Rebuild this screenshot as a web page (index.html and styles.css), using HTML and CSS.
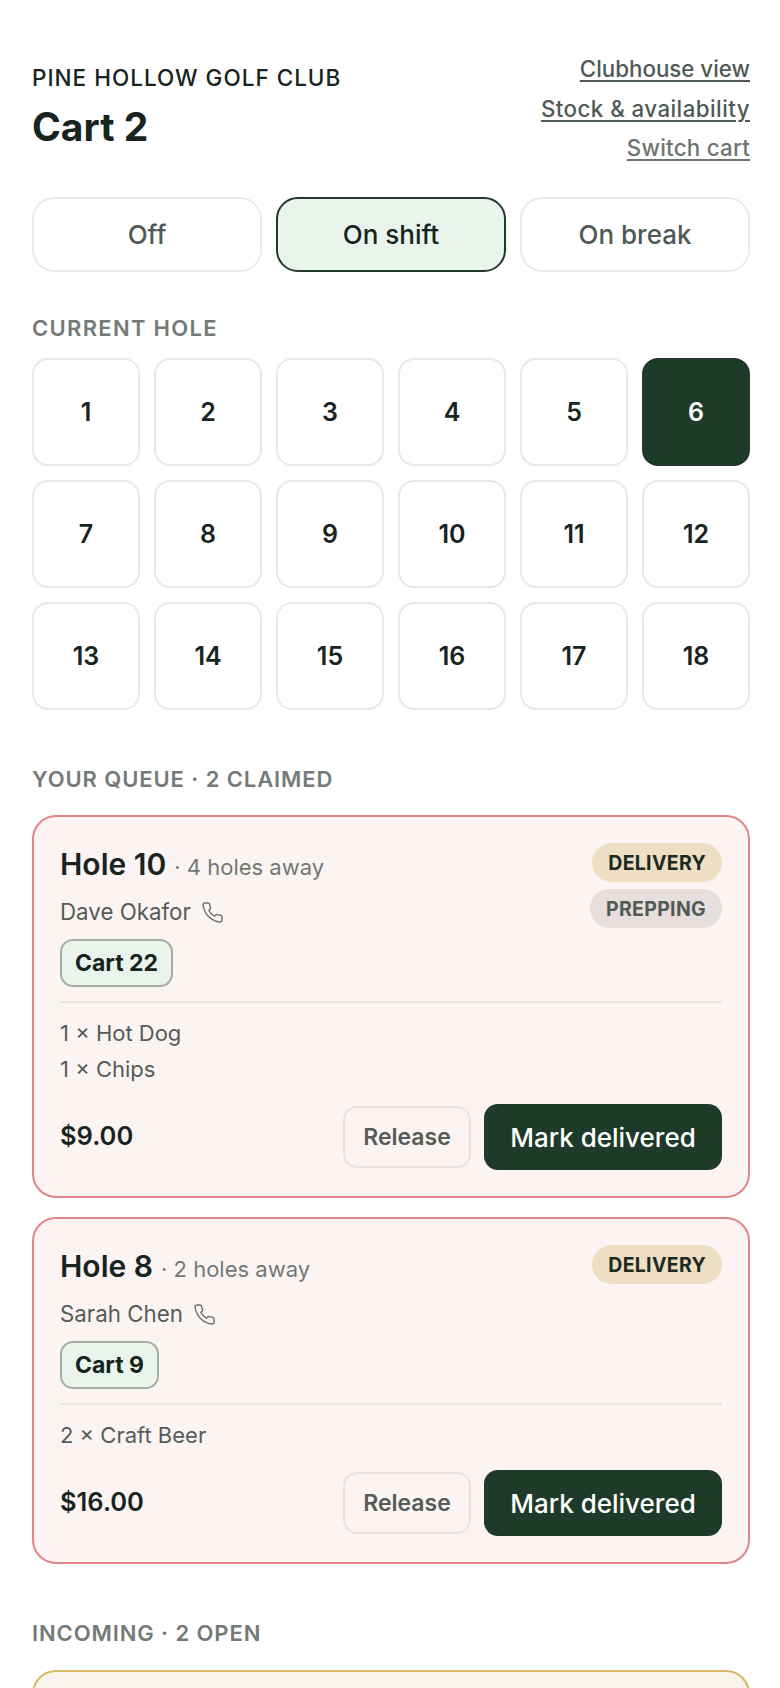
FILE: index.html
```html
<!DOCTYPE html>
<html lang="en">
<head>
<meta charset="utf-8">
<title>Cart 2</title>
<link rel="stylesheet" href="styles.css">
</head>
<body>
<main class="page">
  <header class="top">
    <div class="brand">
      <div class="club">PINE HOLLOW GOLF CLUB</div>
      <h1 class="cart-title">Cart 2</h1>
    </div>
    <nav class="links">
      <a class="link" href="#">Clubhouse view</a>
      <a class="link link-wide" href="#">Stock &amp; availability</a>
      <a class="link link-muted" href="#">Switch cart</a>
    </nav>
  </header>

  <div class="status">
    <button class="status-btn">Off</button>
    <button class="status-btn is-on">On shift</button>
    <button class="status-btn">On break</button>
  </div>

  <div class="label label-hole">CURRENT HOLE</div>
  <div class="holes">
    <button class="hole">1</button><button class="hole">2</button><button class="hole">3</button>
    <button class="hole">4</button><button class="hole">5</button><button class="hole is-current">6</button>
    <button class="hole">7</button><button class="hole">8</button><button class="hole">9</button>
    <button class="hole">10</button><button class="hole">11</button><button class="hole">12</button>
    <button class="hole">13</button><button class="hole">14</button><button class="hole">15</button>
    <button class="hole">16</button><button class="hole">17</button><button class="hole">18</button>
  </div>

  <div class="label label-queue">YOUR QUEUE · 2 CLAIMED</div>
  <div class="cards">
    <article class="card">
      <div class="head">
        <div class="who">
          <div class="where"><span class="hole-name">Hole 10</span><span class="away">· 4 holes away</span></div>
          <div class="person">Dave Okafor
            <svg class="phone" viewBox="0 0 24 24" fill="none" stroke="currentColor" stroke-width="1.5" stroke-linecap="round" stroke-linejoin="round"><path d="M22 16.92v3a2 2 0 0 1-2.18 2 19.79 19.79 0 0 1-8.63-3.07 19.5 19.5 0 0 1-6-6 19.79 19.79 0 0 1-3.07-8.67A2 2 0 0 1 4.11 2h3a2 2 0 0 1 2 1.72c.13.96.36 1.9.7 2.81a2 2 0 0 1-.45 2.11L8.09 9.91a16 16 0 0 0 6 6l1.27-1.27a2 2 0 0 1 2.11-.45c.91.34 1.85.57 2.81.7A2 2 0 0 1 22 16.92z"/></svg>
          </div>
          <span class="chip">Cart 22</span>
        </div>
        <div class="pills">
          <span class="pill pill-delivery">DELIVERY</span>
          <span class="pill pill-prep">PREPPING</span>
        </div>
      </div>
      <div class="items">
        <div class="item">1 × Hot Dog</div>
        <div class="item">1 × Chips</div>
      </div>
      <div class="foot">
        <span class="price">$9.00</span>
        <div class="actions">
          <button class="release">Release</button>
          <button class="deliver">Mark delivered</button>
        </div>
      </div>
    </article>

    <article class="card">
      <div class="head">
        <div class="who">
          <div class="where"><span class="hole-name">Hole 8</span><span class="away">· 2 holes away</span></div>
          <div class="person">Sarah Chen
            <svg class="phone" viewBox="0 0 24 24" fill="none" stroke="currentColor" stroke-width="1.5" stroke-linecap="round" stroke-linejoin="round"><path d="M22 16.92v3a2 2 0 0 1-2.18 2 19.79 19.79 0 0 1-8.63-3.07 19.5 19.5 0 0 1-6-6 19.79 19.79 0 0 1-3.07-8.67A2 2 0 0 1 4.11 2h3a2 2 0 0 1 2 1.72c.13.96.36 1.9.7 2.81a2 2 0 0 1-.45 2.11L8.09 9.91a16 16 0 0 0 6 6l1.27-1.27a2 2 0 0 1 2.11-.45c.91.34 1.85.57 2.81.7A2 2 0 0 1 22 16.92z"/></svg>
          </div>
          <span class="chip">Cart 9</span>
        </div>
        <div class="pills">
          <span class="pill pill-delivery">DELIVERY</span>
        </div>
      </div>
      <div class="items">
        <div class="item">2 × Craft Beer</div>
      </div>
      <div class="foot">
        <span class="price">$16.00</span>
        <div class="actions">
          <button class="release">Release</button>
          <button class="deliver">Mark delivered</button>
        </div>
      </div>
    </article>
  </div>

  <div class="label label-incoming">INCOMING · 2 OPEN</div>
  <article class="card card-open"></article>
</main>
</body>
</html>
```
FILE: styles.css
```css
* { box-sizing: border-box; }
html, body { margin: 0; padding: 0; background: #fff; }
body { height: 1688px; overflow: hidden; font-family: Inter, "Liberation Sans", sans-serif; color: #18241e; }
button { font-family: inherit; cursor: pointer; }
.page { padding: 0 30px 0 32px; }

.top { display: flex; justify-content: space-between; align-items: flex-start; padding-top: 50px; }
.club { padding-top: 1px; font-size: 22.5px; line-height: 53px; height: 54px; font-weight: 500; letter-spacing: 1px; color: #18241e; }
.cart-title { margin: 0; font-size: 39px; line-height: 46px; font-weight: 700; }
.links { display: flex; flex-direction: column; align-items: flex-end; gap: 9px; padding-top: 4px; }
.link { font-size: 22.3px; line-height: 30.5px; font-weight: 500; color: #4f5a55; text-decoration: underline; text-underline-offset: 3px; }
.link-wide { letter-spacing: 0.45px; }
.link-muted { color: #6c7470; letter-spacing: 0.25px; }

.status { display: grid; grid-template-columns: repeat(3, 1fr); gap: 14px; margin-top: 33.5px; }
.status-btn { height: 75px; border: 2px solid #e9e9e6; border-radius: 22px; background: #fff; font-size: 26px; font-weight: 500; color: #4f5a55; }
.status-btn.is-on { background: #e9f4ec; border-color: #1f3a2a; color: #18241e; }

.label { font-size: 22px; line-height: 30px; font-weight: 600; letter-spacing: 0.9px; color: #747b77; }
.label-hole { margin-top: 41px; letter-spacing: 1.3px; }
.label-queue { margin-top: 54px; }
.label-incoming { margin-top: 54px; }

.holes { display: grid; grid-template-columns: repeat(6, 1fr); gap: 14px; margin-top: 15px; }
.hole { aspect-ratio: 1; border: 2px solid #e8e8e5; border-radius: 16px; background: #fff; font-size: 25px; font-weight: 600; color: #18241e; padding: 0; }
.hole.is-current { background: #1e3a28; border-color: #1e3a28; color: #fff; }

.cards { display: flex; flex-direction: column; gap: 19px; margin-top: 21px; }
.card { border: 2px solid #e28488; border-radius: 24px; background: #fcf4f2; padding: 26px; }
.card-open { margin-top: 22px; min-height: 300px; background: #faf5ec; border-color: #d9b565; }

.head { display: flex; justify-content: space-between; align-items: flex-start; padding-bottom: 14px; border-bottom: 2px solid #e8e4e2; }
.who { display: flex; flex-direction: column; align-items: flex-start; }
.where { display: flex; align-items: baseline; gap: 8px; line-height: 42px; }
.hole-name { font-size: 30px; font-weight: 600; color: #18241e; }
.away { font-size: 22px; color: #727975; }
.person { display: flex; align-items: center; gap: 10px; margin-top: 6px; font-size: 22.3px; line-height: 36px; color: #555c58; }
.phone { width: 23px; height: 23px; color: #6c7470; }
.chip { display: inline-flex; align-items: center; height: 48px; margin-top: 9px; padding: 0 13px; border: 2px solid #a4aea7; border-radius: 13px; background: #e9f4ec; font-size: 23px; font-weight: 700; color: #14241b; }
.pills { display: flex; flex-direction: column; align-items: flex-end; gap: 7px; }
.pill { display: inline-flex; align-items: center; height: 39px; padding: 0 16px; border-radius: 20px; font-size: 19.5px; font-weight: 700; letter-spacing: 0.3px; }
.pill-delivery { background: #eedfc4; color: #1c2a22; }
.pill-prep { background: #e6dfdd; color: #525a55; }

.items { padding-top: 12px; }
.item { font-size: 22px; line-height: 36px; color: #555c58; }

.foot { display: flex; justify-content: space-between; align-items: center; margin-top: 17px; }
.price { padding-bottom: 4px; font-size: 25.5px; font-weight: 600; color: #18241e; }
.actions { display: flex; align-items: center; gap: 13px; }
.release { height: 62px; width: 128px; border: 2px solid #ebe2e0; border-radius: 14px; background: transparent; font-size: 23px; font-weight: 600; color: #555c58; padding: 0; }
.deliver { height: 66px; width: 238px; border: 0; border-radius: 14px; background: #1e3a28; font-size: 26px; font-weight: 500; color: #fff; padding: 0; }
```
